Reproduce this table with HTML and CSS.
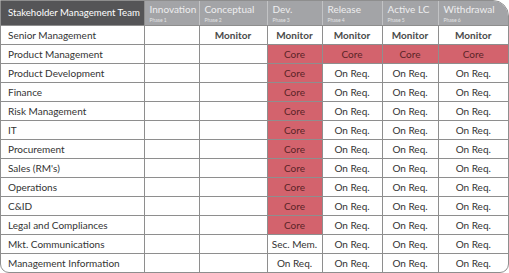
FILE: index.html
```html
<!DOCTYPE html>
<html lang="en">
<head>
    <meta charset="UTF-8">
    <title>Stakeholder Matrix</title>
    <link rel="stylesheet" href="styles.css">
</head>
<body>
    <div class="frame">
        <table class="matrix">
            <colgroup>
                <col class="c-team">
                <col class="c-p1">
                <col class="c-p2">
                <col class="c-p3">
                <col class="c-p4">
                <col class="c-p5">
                <col class="c-p6">
            </colgroup>
            <thead>
                <tr>
                    <th class="team-head">Stakeholder Management Team</th>
                    <th>Innovation<span class="phase">Phase 1</span></th>
                    <th>Conceptual<span class="phase">Phase 2</span></th>
                    <th>Dev.<span class="phase">Phase 3</span></th>
                    <th>Release<span class="phase">Phase 4</span></th>
                    <th>Active LC<span class="phase">Phase 5</span></th>
                    <th>Withdrawal<span class="phase">Phase 6</span></th>
                </tr>
            </thead>
            <tbody>
                <tr>
                    <td>Senior Management</td>
                    <td></td>
                    <td class="monitor">Monitor</td>
                    <td class="monitor">Monitor</td>
                    <td class="monitor">Monitor</td>
                    <td class="monitor">Monitor</td>
                    <td class="monitor">Monitor</td>
                </tr>
                <tr>
                    <td>Product Management</td>
                    <td></td>
                    <td></td>
                    <td class="core">Core</td>
                    <td class="core">Core</td>
                    <td class="core">Core</td>
                    <td class="core">Core</td>
                </tr>
                <tr>
                    <td>Product Development</td>
                    <td></td><td></td>
                    <td class="core">Core</td>
                    <td>On Req.</td><td>On Req.</td><td>On Req.</td>
                </tr>
                <tr>
                    <td>Finance</td>
                    <td></td><td></td>
                    <td class="core">Core</td>
                    <td>On Req.</td><td>On Req.</td><td>On Req.</td>
                </tr>
                <tr>
                    <td>Risk Management</td>
                    <td></td><td></td>
                    <td class="core">Core</td>
                    <td>On Req.</td><td>On Req.</td><td>On Req.</td>
                </tr>
                <tr>
                    <td>IT</td>
                    <td></td><td></td>
                    <td class="core">Core</td>
                    <td>On Req.</td><td>On Req.</td><td>On Req.</td>
                </tr>
                <tr>
                    <td>Procurement</td>
                    <td></td><td></td>
                    <td class="core">Core</td>
                    <td>On Req.</td><td>On Req.</td><td>On Req.</td>
                </tr>
                <tr>
                    <td>Sales (RM's)</td>
                    <td></td><td></td>
                    <td class="core">Core</td>
                    <td>On Req.</td><td>On Req.</td><td>On Req.</td>
                </tr>
                <tr>
                    <td>Operations</td>
                    <td></td><td></td>
                    <td class="core">Core</td>
                    <td>On Req.</td><td>On Req.</td><td>On Req.</td>
                </tr>
                <tr>
                    <td>C&amp;ID</td>
                    <td></td><td></td>
                    <td class="core">Core</td>
                    <td>On Req.</td><td>On Req.</td><td>On Req.</td>
                </tr>
                <tr>
                    <td>Legal and Compliances</td>
                    <td></td><td></td>
                    <td class="core">Core</td>
                    <td>On Req.</td><td>On Req.</td><td>On Req.</td>
                </tr>
                <tr>
                    <td>Mkt. Communications</td>
                    <td></td><td></td>
                    <td>Sec. Mem.</td>
                    <td>On Req.</td><td>On Req.</td><td>On Req.</td>
                </tr>
                <tr>
                    <td>Management Information</td>
                    <td></td><td></td>
                    <td>On Req.</td>
                    <td>On Req.</td><td>On Req.</td><td>On Req.</td>
                </tr>
            </tbody>
        </table>
    </div>
</body>
</html>
```

FILE: styles.css
```css
:root {
    --line: #8e8e8e;
    --head-dark: #555557;
    --head-light: #a3a4a7;
    --core: #d3636d;
    --text: #333333;
}

* {
    margin: 0;
    padding: 0;
    box-sizing: border-box;
}

body {
    font-family: 'Lato', sans-serif;
    background-color: #ffffff;
    color: var(--text);
}

.frame {
    width: 509px;
    height: 273px;
    border: 1px solid var(--line);
    border-radius: 0 16px 9px 9px;
    overflow: hidden;
}

.matrix {
    width: 100%;
    border-collapse: collapse;
    table-layout: fixed;
    font-size: 10px;
}

.c-team { width: 143px; }
.c-p1 { width: 55px; }
.c-p2 { width: 68px; }
.c-p3 { width: 55px; }
.c-p4 { width: 60px; }
.c-p5 { width: 56px; }
.c-p6 { width: 70px; }

th {
    height: 24px;
    background-color: var(--head-light);
    color: #eeeeef;
    font-weight: 400;
    font-size: 10px;
    text-align: left;
    vertical-align: top;
    padding: 3px 0 0 5px;
    line-height: 11px;
    white-space: nowrap;
    border-left: 1px solid #c2c3c5;
    border-bottom: 1px solid var(--line);
}

th:first-child {
    border-left: none;
}

.team-head {
    background-color: var(--head-dark);
    color: #ffffff;
    font-size: 9.6px;
    vertical-align: middle;
    padding: 0 0 0 7px;
    border-right: 1px solid var(--line);
}

.phase {
    display: block;
    margin-top: 2px;
    font-size: 5px;
    line-height: 6px;
    color: #e4e4e6;
}

td {
    height: 19px;
    border: 1px solid var(--line);
    text-align: center;
    padding: 0 2px;
    white-space: nowrap;
    line-height: 12px;
}

tr td:first-child {
    text-align: left;
    padding-left: 7px;
    border-left: none;
}

tr td:last-child {
    border-right: none;
}

tbody tr:last-child td {
    border-bottom: none;
}

.monitor {
    font-weight: 700;
    color: #4a4a4a;
}

.core {
    background-color: var(--core);
    color: #5a2327;
}
```
